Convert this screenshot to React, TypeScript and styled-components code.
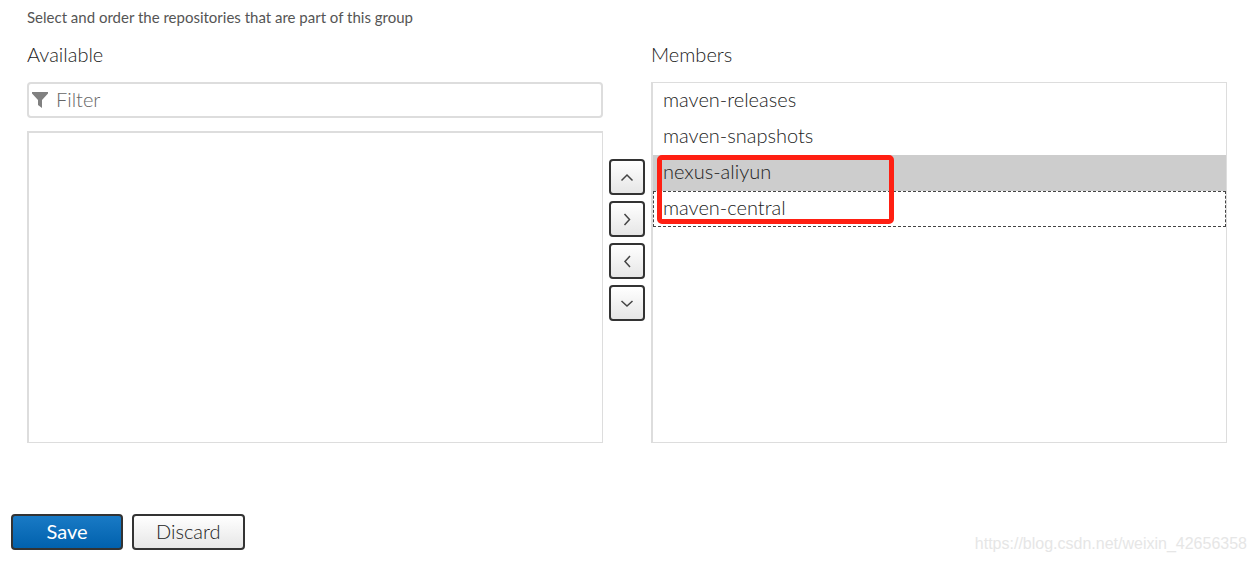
import React, { useState } from 'react';
import styled, { createGlobalStyle, css } from 'styled-components';

const GlobalStyle = createGlobalStyle`
  *, *::before, *::after { box-sizing: border-box; }
  body {
    margin: 0;
    background: #fff;
    color: #222;
    font-family: Lato, "Liberation Sans", sans-serif;
    font-size: 20px;
    line-height: 24px;
    font-weight: 300;
  }
`;

const Form = styled.main`
  display: flex;
  flex-direction: column;
  padding: 7px 29px 0 27px;
`;

const Hint = styled.p`
  margin: 0 0 8px;
  color: #555;
  font-size: 15px;
  line-height: 20px;
  font-weight: 400;
`;

const Picker = styled.div`
  display: grid;
  grid-template-columns: 1fr 36px 1fr;
  column-gap: 6px;
  padding-top: 1px;
`;

const Column = styled.section`
  display: flex;
  flex-direction: column;
`;

const Title = styled.h2`
  margin: 0;
  padding: 6px 0 16px;
  font-size: 20px;
  line-height: 24px;
  font-weight: 300;
`;

const FilterBox = styled.label`
  display: flex;
  align-items: center;
  gap: 8px;
  height: 36px;
  margin-bottom: 13px;
  padding: 0 3px;
  border: 2px solid #ddd;
  border-radius: 4px;
`;

const FilterInput = styled.input`
  flex: 1;
  min-width: 0;
  padding: 0 0 3px;
  border: 0;
  outline: 0;
  background: transparent;
  color: inherit;
  font: inherit;
  &::placeholder { color: #666; opacity: 1; }
`;

const List = styled.ul<{ $thinTop?: boolean }>`
  position: relative;
  flex: 1;
  min-height: 312px;
  margin: 0;
  padding: 0;
  list-style: none;
  border: solid #ddd;
  border-width: ${(p) => (p.$thinTop ? '1px 1px 1px 2px' : '2px 1px 1px 2px')};
`;

const Item = styled.li<{ $selected: boolean; $focused: boolean }>`
  height: 36px;
  padding: 0 10px;
  line-height: 33px;
  cursor: default;
  ${(p) => p.$selected && css`background: #cdcdcd;`}
  ${(p) => p.$focused && css`outline: 1px dashed #444; outline-offset: -1px;`}
`;

const Highlight = styled.div`
  position: absolute;
  top: 72px;
  left: 4px;
  width: 237px;
  height: 69px;
  border: 5px solid #ff1f12;
  border-radius: 5px;
  pointer-events: none;
`;

const Movers = styled.div`
  display: flex;
  flex-direction: column;
  justify-content: center;
  gap: 6px;
`;

const Button = styled.button<{ $primary?: boolean }>`
  display: flex;
  align-items: center;
  justify-content: center;
  height: 36px;
  padding: 0;
  border: 2px solid #333;
  border-radius: 4px;
  background: ${(p) => (p.$primary ? 'linear-gradient(#197ac5, #0161ad)' : 'linear-gradient(#fff, #e6e6e6)')};
  color: ${(p) => (p.$primary ? '#fff' : '#222')};
  font: inherit;
  font-weight: ${(p) => (p.$primary ? 400 : 300)};
  cursor: pointer;
`;

const ActionButton = styled(Button)`
  min-width: 112px;
  padding: 0 22px 3px;
`;

const Footer = styled.footer`
  display: flex;
  align-items: flex-end;
  justify-content: space-between;
  padding: 71px 9px 0 11px;
`;

const Actions = styled.div`
  display: flex;
  gap: 9px;
  padding-bottom: 12px;
`;

const Watermark = styled.span`
  padding-bottom: 8px;
  color: #e6e6e6;
  font-family: "Liberation Sans", Arial, sans-serif;
  font-size: 16px;
  line-height: 20px;
  font-weight: 400;
`;

const arrows = [
  { name: 'Move up', d: 'M4.5 13.5 10 8l5.5 5.5' },
  { name: 'Add', d: 'M7.5 5l5 5.500-5 5.500' },
  { name: 'Remove', d: 'M13 5l-5 5.500 5 5.500' },
  { name: 'Move down', d: 'M4.5 8l5.5 5 5.5-5' },
];

const members = ['maven-releases', 'maven-snapshots', 'nexus-aliyun', 'maven-central'];

export default function App() {
  const [filter, setFilter] = useState('');
  const [selected, setSelected] = useState(2);
  const [focused, setFocused] = useState(3);

  return (
    <>
      <GlobalStyle />
      <Form>
        <Hint>Select and order the repositories that are part of this group</Hint>
        <Picker>
          <Column>
            <Title>Available</Title>
            <FilterBox>
              <svg width="16" height="16" viewBox="0 0 16 16" fill="#808080" aria-hidden="true">
                <path d="M0 0h16v1.5L10 8v8l-4-3V8L0 1.5z" />
              </svg>
              <FilterInput
                aria-label="Filter"
                placeholder="Filter"
                value={filter}
                onChange={(e) => setFilter(e.target.value)}
              />
            </FilterBox>
            <List role="listbox" aria-label="Available" />
          </Column>
          <Movers>
            {arrows.map((a) => (
              <Button key={a.name} type="button" aria-label={a.name}>
                <svg width="20" height="20" viewBox="0 0 20 20" fill="none" stroke="#444" strokeWidth="1.5" aria-hidden="true">
                  <path d={a.d} />
                </svg>
              </Button>
            ))}
          </Movers>
          <Column>
            <Title>Members</Title>
            <List $thinTop role="listbox" aria-label="Members">
              {members.map((name, i) => (
                <Item
                  key={name}
                  role="option"
                  aria-selected={i === selected}
                  $selected={i === selected}
                  $focused={i === focused}
                  onClick={() => {
                    setSelected(i);
                    setFocused(i);
                  }}
                >
                  {name}
                </Item>
              ))}
              <Highlight />
            </List>
          </Column>
        </Picker>
      </Form>
      <Footer>
        <Actions>
          <ActionButton type="button" $primary>Save</ActionButton>
          <ActionButton type="button">Discard</ActionButton>
        </Actions>
        <Watermark>https://blog.csdn.net/weixin_42656358</Watermark>
      </Footer>
    </>
  );
}
